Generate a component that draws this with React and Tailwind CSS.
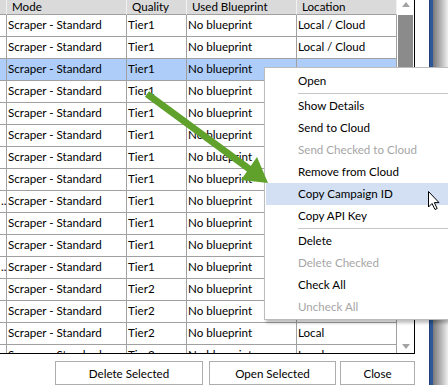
import { Fragment } from 'react';

const rows = [
  { quality: 'Tier1', location: 'Local / Cloud' },
  { quality: 'Tier1', location: 'Local / Cloud' },
  { quality: 'Tier1', location: '', selected: true },
  { quality: 'Tier1', location: 'Local / Cloud' },
  { quality: 'Tier1', location: 'Local / Cloud' },
  { quality: 'Tier1', location: 'Local / Cloud' },
  { quality: 'Tier1', location: 'Local / Cloud' },
  { quality: 'Tier1', location: 'Local / Cloud' },
  { quality: 'Tier1', location: 'Local / Cloud', mark: true },
  { quality: 'Tier1', location: 'Local / Cloud' },
  { quality: 'Tier1', location: 'Local / Cloud' },
  { quality: 'Tier1', location: 'Local / Cloud', mark: true },
  { quality: 'Tier2', location: 'Local' },
  { quality: 'Tier2', location: 'Local' },
  { quality: 'Tier2', location: 'Local' },
  { quality: 'Tier2', location: 'Local' },
];

const menuItems = [
  { label: 'Open' },
  { sep: true },
  { label: 'Show Details' },
  { label: 'Send to Cloud' },
  { label: 'Send Checked to Cloud', disabled: true },
  { label: 'Remove from Cloud' },
  { label: 'Copy Campaign ID', active: true },
  { label: 'Copy API Key' },
  { sep: true },
  { label: 'Delete' },
  { label: 'Delete Checked', disabled: true },
  { label: 'Check All' },
  { label: 'Uncheck All', disabled: true },
];

const Cell = ({ children, selected, className = '' }) => (
  <div
    className={`h-[22px] border-r border-b border-[#a0a0a0] pl-[1px] leading-[20px] whitespace-nowrap overflow-hidden ${selected ? 'bg-[#aecdf8]' : 'bg-white'} ${className}`}
  >
    {children}
  </div>
);

const ContextMenu = () => (
  <div className="absolute left-[264px] top-[67px] w-[200px] bg-white border border-[#bcbcbc] pt-[2px] pb-[1px] px-[1px] shadow-[2px_3px_3px_rgba(0,0,0,0.25)] z-10">
    {menuItems.map((item, i) =>
      item.sep ? (
        <div key={i} className="py-[1px] pl-[32px]">
          <div className="h-px bg-[#c6c6c6]" />
        </div>
      ) : (
        <div
          key={i}
          className={`h-[22px] leading-[22px] pl-[32px] ${item.active ? 'bg-[#d3e0f3]' : ''} ${item.disabled ? 'text-[#a6a6a6]' : 'text-black'}`}
        >
          {item.label}
        </div>
      )
    )}
  </div>
);

const Arrow = () => (
  <svg className="absolute left-0 top-0 pointer-events-none z-20" width="448" height="385">
    <line x1="147" y1="94" x2="252" y2="171" stroke="#5fa12b" strokeWidth="7" />
    <polygon points="268,183 257,157 241,180" fill="#5fa12b" />
  </svg>
);

const Cursor = () => (
  <svg className="absolute left-[427px] top-[190px] pointer-events-none z-20" width="14" height="21" viewBox="0 0 14 21">
    <path d="M1.5 1.5 L1.5 17 L5 13.5 L8 19.5 L10.2 18.5 L7.3 12.6 L12 12.6 Z" fill="white" stroke="black" strokeWidth="1" strokeLinejoin="miter" />
  </svg>
);

export default function App() {
  return (
    <div className="relative w-[448px] h-[385px] overflow-hidden bg-white flex font-['Lato','Noto_Sans',sans-serif] text-[11.6px] text-black">
      <div className="w-[429px] flex flex-col">
        <div className="flex w-[415px] h-[356px] border-r border-b border-black overflow-hidden">
          <div className="w-[397px] grid grid-cols-[7px_120px_60px_110px_100px] content-start">
            {['', 'Mode', 'Quality', 'Used Blueprint', 'Location'].map((h, i) => (
              <div key={i} className="h-[15px] bg-[#dadada] border-r border-r-[#f2f2f2] border-b border-b-[#a0a0a0] pl-[5px] leading-[13px] whitespace-nowrap overflow-hidden">
                {h}
              </div>
            ))}
            {rows.map((r, i) => (
              <Fragment key={i}>
                <Cell selected={r.selected} className="text-right pr-[1px] pl-0">{r.mark ? '..' : ''}</Cell>
                <Cell selected={r.selected}>Scraper - Standard</Cell>
                <Cell selected={r.selected}>{r.quality}</Cell>
                <Cell selected={r.selected}>No blueprint</Cell>
                <Cell selected={r.selected}>{r.location}</Cell>
              </Fragment>
            ))}
          </div>
          <div className="w-[17px] bg-white flex flex-col items-center">
            <div className="h-[15px] flex items-start justify-center pt-[2px]">
              <div className="w-0 h-0 border-l-[4px] border-r-[4px] border-b-[5px] border-l-transparent border-r-transparent border-b-[#a3a3a3]" />
            </div>
            <div className="w-[15px] h-[150px] bg-[#8b8b8b]" />
            <div className="flex-1" />
            <div className="h-[9px] flex items-start justify-center">
              <div className="w-0 h-0 border-l-[4px] border-r-[4px] border-t-[5px] border-l-transparent border-r-transparent border-t-[#a3a3a3]" />
            </div>
          </div>
        </div>
        <div className="flex pt-[7px] pl-[55px]">
          <button className="w-[148px] h-[24px] border border-[#adadad] bg-white leading-[21px] text-center">Delete Selected</button>
          <button className="ml-[6px] w-[127px] h-[24px] border border-[#adadad] bg-white leading-[21px] text-center">Open Selected</button>
          <button className="ml-[4px] w-[75px] h-[24px] border border-[#adadad] bg-white leading-[21px] text-center">Close</button>
        </div>
      </div>
      <div className="w-[4px] bg-[#2d5799] border-l border-[#1f3f75]" />
      <div className="flex-1 bg-gradient-to-r from-[#7a7a7a] to-[#efefef]" />
      <ContextMenu />
      <Arrow />
      <Cursor />
    </div>
  );
}
